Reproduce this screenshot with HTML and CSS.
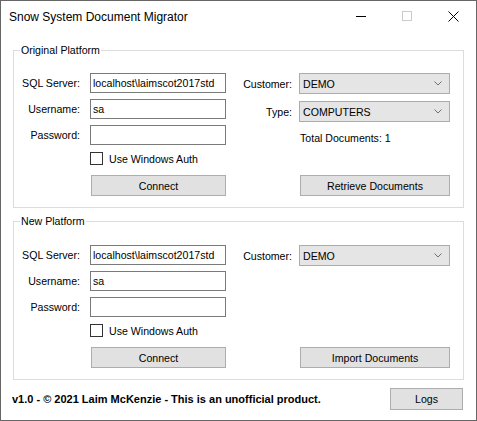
FILE: index.html
```html
<!DOCTYPE html>
<html>
<head>
<meta charset="utf-8">
<link rel="stylesheet" href="styles.css">
</head>
<body>
<div class="window">
  <div class="titlebar">
    <div class="title">Snow System Document Migrator</div>
    <div class="caption-buttons">
      <div class="cap-btn">
        <svg width="10" height="10" viewBox="0 0 10 10"><line x1="0" y1="5.5" x2="10" y2="5.5" stroke="#000" stroke-width="1"/></svg>
      </div>
      <div class="cap-btn">
        <svg width="10" height="10" viewBox="0 0 10 10"><rect x="0.5" y="0.5" width="9" height="9" fill="none" stroke="#cccccc" stroke-width="1"/></svg>
      </div>
      <div class="cap-btn">
        <svg width="11" height="11" viewBox="0 0 11 11"><path d="M0.5 0.5 L10.5 10.5 M10.5 0.5 L0.5 10.5" stroke="#000" stroke-width="1"/></svg>
      </div>
    </div>
  </div>

  <fieldset class="group group-first">
    <legend>Original Platform</legend>
    <div class="group-body">
      <div class="col-left">
        <div class="row"><span class="lbl">SQL Server:</span><div class="textbox">localhost\laimscot2017std</div></div>
        <div class="row"><span class="lbl">Username:</span><div class="textbox">sa</div></div>
        <div class="row"><span class="lbl">Password:</span><div class="textbox"></div></div>
        <div class="check-row"><span class="checkbox"></span><span class="check-label">Use Windows Auth</span></div>
        <div class="btn btn-left">Connect</div>
      </div>
      <div class="col-right">
        <div class="row-r"><span class="lbl-r">Customer:</span><div class="combo"><span>DEMO</span><svg class="chev" width="8" height="5" viewBox="0 0 8 5"><path d="M0.5 0.5 L4 4 L7.5 0.5" fill="none" stroke="#707070" stroke-width="1"/></svg></div></div>
        <div class="row-r"><span class="lbl-r">Type:</span><div class="combo"><span>COMPUTERS</span><svg class="chev" width="8" height="5" viewBox="0 0 8 5"><path d="M0.5 0.5 L4 4 L7.5 0.5" fill="none" stroke="#707070" stroke-width="1"/></svg></div></div>
        <div class="total">Total Documents: 1</div>
        <div class="btn btn-right">Retrieve Documents</div>
      </div>
    </div>
  </fieldset>

  <fieldset class="group group-second">
    <legend>New Platform</legend>
    <div class="group-body">
      <div class="col-left">
        <div class="row"><span class="lbl">SQL Server:</span><div class="textbox">localhost\laimscot2017std</div></div>
        <div class="row"><span class="lbl">Username:</span><div class="textbox">sa</div></div>
        <div class="row"><span class="lbl">Password:</span><div class="textbox"></div></div>
        <div class="check-row"><span class="checkbox"></span><span class="check-label">Use Windows Auth</span></div>
        <div class="btn btn-left">Connect</div>
      </div>
      <div class="col-right col-right-bottom">
        <div class="row-r"><span class="lbl-r">Customer:</span><div class="combo"><span>DEMO</span><svg class="chev" width="8" height="5" viewBox="0 0 8 5"><path d="M0.5 0.5 L4 4 L7.5 0.5" fill="none" stroke="#707070" stroke-width="1"/></svg></div></div>
        <div class="btn btn-right">Import Documents</div>
      </div>
    </div>
  </fieldset>

  <div class="footer">
    <div class="credit">v1.0 - © 2021 Laim McKenzie - This is an unofficial product.</div>
    <div class="btn btn-logs">Logs</div>
  </div>
</div>
</body>
</html>
```

FILE: styles.css
```css
html, body {
  margin: 0;
  padding: 0;
  background: #ffffff;
}

.window {
  width: 477px;
  height: 421px;
  box-sizing: border-box;
  border: 1px solid #666666;
  background: #ffffff;
  display: flex;
  flex-direction: column;
  font-family: "Liberation Sans", Arial, sans-serif;
  font-size: 10.6px;
  color: #000;
}

.titlebar {
  height: 30px;
  display: flex;
  align-items: center;
  justify-content: space-between;
  flex: none;
}

.title {
  padding-left: 8px;
  font-family: "Liberation Sans", Arial, sans-serif;
  font-size: 12px;
  color: #000;
  padding-top: 1px;
}

.caption-buttons {
  display: flex;
  height: 30px;
}

.cap-btn {
  width: 46px;
  height: 30px;
  display: flex;
  align-items: center;
  justify-content: center;
}

.cap-btn svg {
  display: block;
}

.group {
  margin: 0 0 0 12px;
  width: 451px;
  box-sizing: border-box;
  border: 1px solid #dcdcdc;
  padding: 16px 0 11px 0;
  min-width: 0;
}

.group-first {
  margin-top: 13px;
}

.group-second {
  margin-top: 7px;
  padding-top: 17px;
}

.group legend {
  margin-left: 6px;
  padding: 0 1px;
  font-size: 10.6px;
  line-height: 13px;
  height: 13px;
}

.group-body {
  display: flex;
  align-items: flex-start;
}

.col-left {
  width: 212px;
  display: flex;
  flex-direction: column;
}

.row {
  display: flex;
  align-items: center;
  height: 20px;
  margin-bottom: 6px;
}

.lbl {
  width: 66px;
  text-align: right;
  margin-right: 10px;
  white-space: nowrap;
}

.textbox {
  width: 136px;
  height: 20px;
  box-sizing: border-box;
  border: 1px solid #7a7a7a;
  padding: 0 0 0 2px;
  line-height: 18px;
  white-space: nowrap;
  overflow: hidden;
}

.check-row {
  display: flex;
  align-items: center;
  height: 13px;
  margin-top: 1px;
  padding-left: 76px;
}

.checkbox {
  width: 13px;
  height: 13px;
  box-sizing: border-box;
  border: 1px solid #333333;
  background: #fff;
}

.check-label {
  margin-left: 6px;
}

.btn {
  height: 21px;
  box-sizing: border-box;
  background: #e1e1e1;
  border: 1px solid #adadad;
  display: flex;
  align-items: center;
  justify-content: center;
  white-space: nowrap;
}

.btn-left {
  width: 135px;
  margin-left: 77px;
  margin-top: 10px;
}

.col-right {
  width: 224px;
  display: flex;
  flex-direction: column;
}

.row-r {
  display: flex;
  align-items: center;
  height: 21px;
  margin-bottom: 7px;
}

.lbl-r {
  width: 66px;
  text-align: right;
  margin-right: 7px;
  white-space: nowrap;
}

.combo {
  width: 151px;
  height: 21px;
  box-sizing: border-box;
  background: #e5e5e5;
  border: 1px solid #acacac;
  display: flex;
  align-items: center;
  justify-content: space-between;
  padding: 0 7px 0 3px;
}

.chev {
  display: block;
}

.total {
  margin-left: 74px;
  margin-top: 2px;
  height: 14px;
  line-height: 14px;
}

.btn-right {
  width: 150px;
  margin-left: 74px;
  margin-top: 30px;
}

.col-right-bottom .btn-right {
  margin-top: 74px;
}

.footer {
  display: flex;
  align-items: center;
  justify-content: space-between;
  padding: 0 13px 0 11px;
  margin-top: 8px;
}

.credit {
  font-weight: bold;
  font-size: 11px;
}

.btn-logs {
  width: 73px;
  height: 22px;
}
```
